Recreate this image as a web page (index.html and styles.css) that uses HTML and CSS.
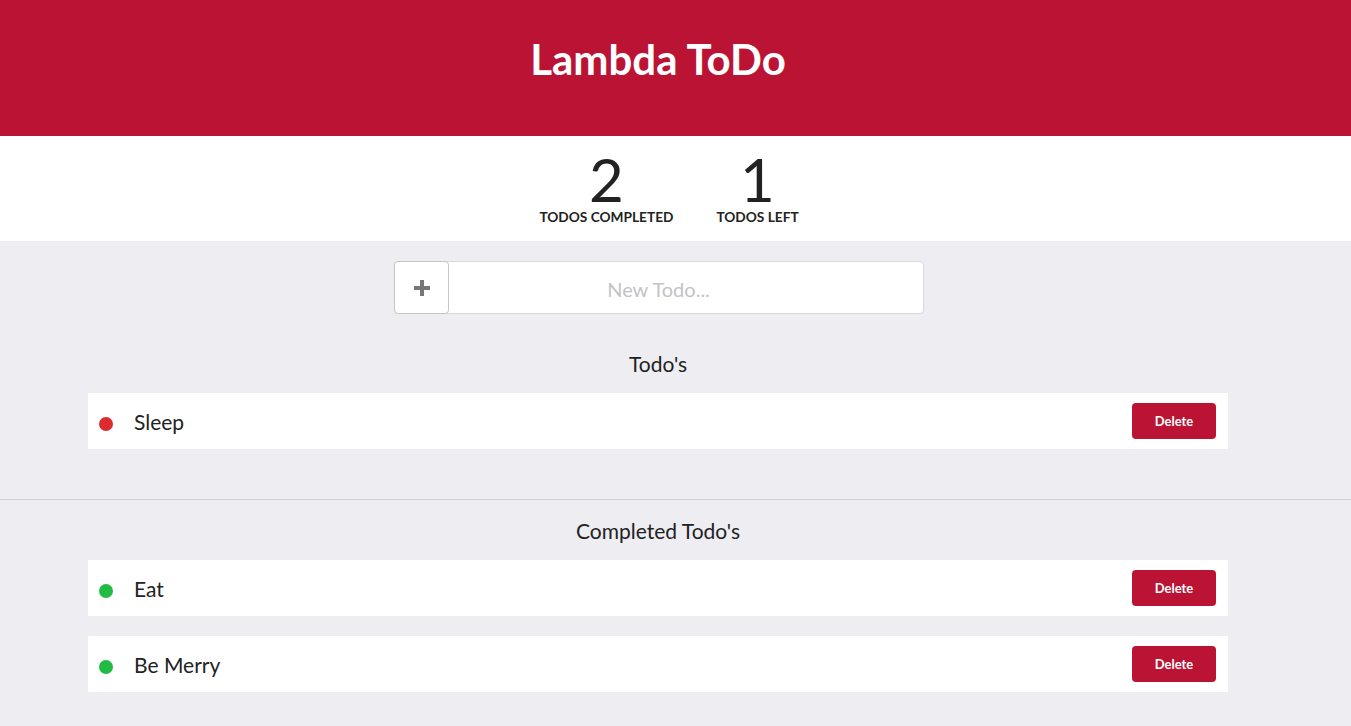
FILE: index.html
```html
<!DOCTYPE html>
<html lang="en">
<head>
<meta charset="utf-8">
<title>Lambda ToDo</title>
<link rel="stylesheet" href="styles.css">
</head>
<body>
  <header class="header">
    <div class="inner">
      <h1 class="title">Lambda ToDo</h1>
    </div>
  </header>
  <section class="stats">
    <div class="inner stats-row">
      <div class="stat stat-completed">
        <div class="stat-num">2</div>
        <div class="stat-label">Todos Completed</div>
      </div>
      <div class="stat stat-left">
        <div class="stat-num">1</div>
        <div class="stat-label">Todos Left</div>
      </div>
    </div>
  </section>
  <main class="main">
    <div class="inner">
      <form class="new-todo">
        <button type="button" class="add-btn" aria-label="Add">
          <svg width="16" height="16" viewBox="0 0 16 16"><path d="M6 0h4v6h6v4h-6v6h-4v-6h-6v-4h6z" fill="#777"/></svg>
        </button>
        <input class="new-input" type="text" placeholder="New Todo...">
      </form>
      <h2 class="section-title">Todo's</h2>
      <ul class="list">
        <li class="item">
          <span class="dot dot-red"></span>
          <span class="item-text">Sleep</span>
          <button type="button" class="delete">Delete</button>
        </li>
      </ul>
    </div>
    <hr class="divider">
    <div class="inner">
      <h2 class="section-title section-title-completed">Completed Todo's</h2>
      <ul class="list">
        <li class="item">
          <span class="dot dot-green"></span>
          <span class="item-text">Eat</span>
          <button type="button" class="delete">Delete</button>
        </li>
        <li class="item">
          <span class="dot dot-green"></span>
          <span class="item-text">Be Merry</span>
          <button type="button" class="delete">Delete</button>
        </li>
      </ul>
    </div>
  </main>
</body>
</html>
```

FILE: styles.css
```css
* { box-sizing: border-box; }
html, body { margin: 0; padding: 0; }
body {
  font-family: Lato, "Open Sans", Arial, sans-serif;
  background: #eeedf2;
  color: #222;
  min-height: 726px;
}
.inner {
  width: 1316px;
}
.header {
  background: #bb1333;
  height: 136px;
}
.header .inner {
  display: flex;
  justify-content: center;
  align-items: center;
  height: 136px;
  padding-bottom: 18px;
}
.title {
  margin: 0;
  color: #fff;
  font-size: 42px;
  font-weight: 700;
  line-height: 1;
}
.stats {
  background: #fff;
  height: 105px;
}
.stats-row {
  display: flex;
  justify-content: center;
  gap: 43px;
  padding-top: 16px;
  padding-left: 22px;
}
.stat {
  display: flex;
  flex-direction: column;
  align-items: center;
}
.stat-num {
  font-size: 60px;
  line-height: 54px;
  font-weight: 400;
  color: #222;
}
.stat-label {
  font-size: 13.7px;
  line-height: 18px;
  font-weight: 700;
  text-transform: uppercase;
  color: #222;
  margin-top: 2px;
}
.new-todo {
  display: flex;
  width: 530px;
  height: 53px;
  margin: 20px 0 0 394px;
  background: #fff;
  border: 1px solid #d8d8dc;
  border-radius: 4px;
}
.add-btn {
  width: 55px;
  height: 53px;
  margin: -1px 0 0 -1px;
  border: 1px solid #c6c6c6;
  border-radius: 4px;
  background: #fff;
  display: flex;
  align-items: center;
  justify-content: center;
  padding: 0;
}
.new-input {
  flex: 1;
  border: none;
  background: transparent;
  text-align: center;
  font-family: Lato, sans-serif;
  font-size: 20px;
  color: #222;
  outline: none;
  padding: 3px 55px 0 0;
}
.new-input::placeholder { color: #c3c3c6; }
.section-title {
  margin: 37px 0 0;
  text-align: center;
  font-size: 21px;
  font-weight: 400;
  line-height: 26px;
  color: #222;
}
.section-title-completed { margin-top: 18px; }
.list {
  list-style: none;
  margin: 16px 88px 0;
  padding: 0;
  display: flex;
  flex-direction: column;
  gap: 20px;
}
.item {
  display: flex;
  align-items: center;
  height: 56px;
  background: #fff;
  padding: 0 12px 0 11px;
}
.dot {
  width: 14px;
  height: 14px;
  border-radius: 50%;
  margin-top: 5px;
}
.dot-red { background: #dc2b2e; }
.dot-green { background: #22bb44; }
.item-text {
  flex: 1;
  margin-left: 21px;
  font-size: 21px;
  color: #222;
}
.delete {
  width: 84px;
  height: 36px;
  background: #bb1333;
  border: none;
  border-radius: 4px;
  color: #fff;
  font-family: Lato, sans-serif;
  font-weight: 700;
  font-size: 13px;
}
.divider {
  border: none;
  border-top: 1px solid #d2d1d6;
  margin: 50px 0 0;
}
```
